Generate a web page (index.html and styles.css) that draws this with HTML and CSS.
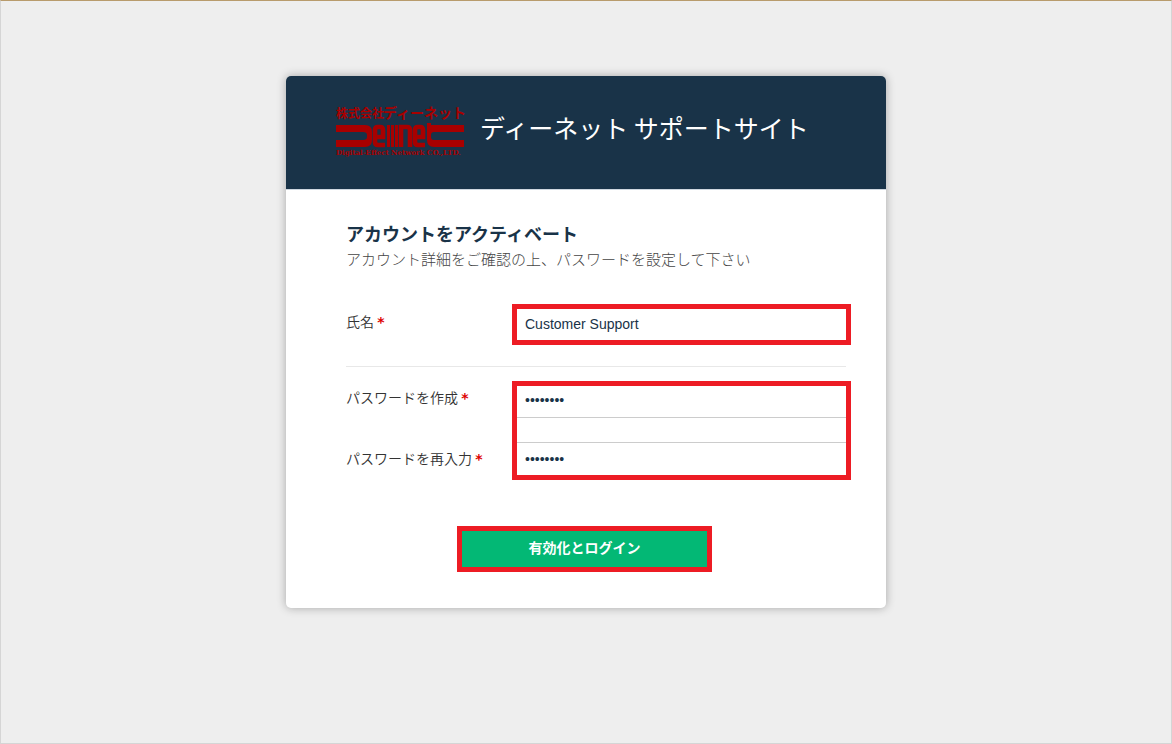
FILE: index.html
```html
<!DOCTYPE html>
<html lang="ja">
<head>
<meta charset="utf-8">
<meta name="viewport" content="width=device-width, initial-scale=1">
<title>ディーネット サポートサイト</title>
<link rel="stylesheet" href="styles.css">
</head>
<body>
<main class="page">
  <section class="card">
    <header class="card-header">
      <svg class="logo" viewBox="0 0 128 52" role="img" aria-label="株式会社ディーネット">
        <g fill="#a80000">
          <text class="logo-name" x="0" y="12" font-size="12">株式会社</text>
          <text class="logo-name" x="47" y="12" font-size="14">ディーネット</text>
          <path d="M0 19H29Q36 19 36 26V34Q36 41 29 41H0V34H27Q31 34 31 31V29Q31 26 27 26H0Z"/>
          <path d="M128 19H95V17H91V34Q91 41 98 41H128V34H98Q95 34 95 31V29Q95 26 98 26H128Z"/>
          <rect x="51" y="19" width="3" height="22"/>
          <rect x="55" y="19" width="3" height="22"/>
          <rect x="59" y="19" width="3" height="22"/>
        </g>
        <g fill="none" stroke="#a80000" stroke-width="4.6">
          <path d="M39 31H47V24Q47 21 44 21H42Q39 21 39 24V36Q39 39 42 39H49"/>
          <path d="M65 41V21H71Q74 21 74 24V41"/>
          <path d="M80 31H87V24Q87 21 84 21H82Q79 21 79 24V36Q79 39 82 39H89"/>
        </g>
        <text class="logo-sub" x="0" y="49" font-size="7">Digital-Effect Network CO.,LTD.</text>
      </svg>
      <h1 class="site-title">ディーネット サポートサイト</h1>
    </header>
    <form class="card-body">
      <h2 class="heading">アカウントをアクティベート</h2>
      <p class="lead">アカウント詳細をご確認の上、パスワードを設定して下さい</p>
      <div class="row name-row">
        <label class="label" for="name">氏名 <span class="required">*</span></label>
        <div class="marked"><input class="field" id="name" type="text" value="Customer Support"></div>
      </div>
      <hr class="divider">
      <div class="row">
        <div class="labels">
          <label class="label" for="password">パスワードを作成 <span class="required">*</span></label>
          <label class="label" for="confirm">パスワードを再入力 <span class="required">*</span></label>
        </div>
        <div class="marked passwords">
          <input class="field field-first" id="password" type="password" value="password">
          <input class="field field-second" id="confirm" type="password" value="password">
        </div>
      </div>
      <div class="actions">
        <button class="submit" type="submit">有効化とログイン</button>
      </div>
    </form>
  </section>
</main>
</body>
</html>
```

FILE: styles.css
```css
* { box-sizing: border-box; }

body {
  margin: 0;
  font-family: "Noto Sans CJK JP", sans-serif;
  color: #333;
}

.page {
  min-height: 100vh;
  padding: 75px 16px;
  background: #eee;
  border: 1px solid #d5d5d5;
  border-top-color: #b89b6c;
}

.card {
  max-width: 600px;
  margin: 0 auto;
  background: #fff;
  border-radius: 5px;
  box-shadow: 0 0 10px rgba(0, 0, 0, 0.3);
}

.card-header {
  display: flex;
  align-items: center;
  gap: 16px;
  padding: 30px 50px 31px;
  background: #193348;
  border-bottom: 1px solid #cfd7df;
  border-radius: 5px 5px 0 0;
}

.logo { width: 128px; height: 52px; flex: none; overflow: visible; }
.logo-name { font-family: "Noto Sans CJK JP", sans-serif; font-weight: 700; }
.logo-sub { font-family: "DejaVu Serif", serif; font-weight: 700; fill: #a80000; }

.site-title {
  margin: 0 0 10px;
  font-size: 25px;
  line-height: 36px;
  font-weight: 400;
  color: #fff;
}

.card-body { padding: 30px 35px 36px 60px; }

.heading {
  margin: 0;
  font-size: 18px;
  line-height: 26px;
  font-weight: 700;
  color: #193348;
}

.lead {
  margin: 0;
  font-size: 15px;
  line-height: 26px;
  font-weight: 300;
  color: #444;
}

.row {
  display: grid;
  grid-template-columns: 166px 1fr;
}

.name-row { margin-top: 32px; }
.name-row .label { padding-top: 5px; }
.labels { display: flex; flex-direction: column; gap: 36px; padding-top: 4px; }

.label { font-size: 14px; line-height: 24px; font-weight: 350; }
.required { color: #d00; font-family: "DejaVu Sans", sans-serif; font-weight: 700; }

.marked { border: 5px solid #ed1c24; }

.field {
  display: block;
  width: 100%;
  height: 31px;
  padding: 0 8px 2px;
  border: 0;
  outline: 0;
  background: #fff;
  color: #193348;
  font: 14px "Liberation Sans", Arial, sans-serif;
}

.passwords { display: grid; gap: 24px; }
.field-first { height: 32px; padding-bottom: 3px; border-bottom: 1px solid #ccc; }
.field-second { height: 33px; padding-bottom: 0; border-top: 1px solid #ccc; }

.divider {
  height: 1px;
  margin: 21px 5px 14px 0;
  border: 0;
  background: #e8e8e8;
}

.actions {
  display: flex;
  justify-content: center;
  margin-top: 46px;
  padding-right: 28px;
}

.submit {
  width: 255px;
  height: 46px;
  padding: 0 0 4px;
  border: 5px solid #ed1c24;
  background: #03b875;
  color: #fff;
  font: 700 14px "Noto Sans CJK JP", sans-serif;
}
```
